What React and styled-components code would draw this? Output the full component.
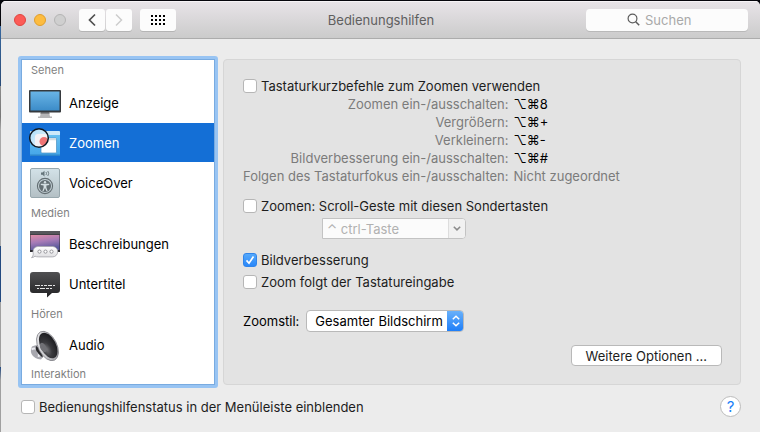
import React, { useState } from 'react'
import styled, { createGlobalStyle } from 'styled-components'

const sections = [
  {
    title: 'Sehen',
    items: [
      { name: 'Anzeige', Icon: DisplayIcon },
      { name: 'Zoomen', Icon: ZoomIcon },
      { name: 'VoiceOver', Icon: VoiceOverIcon },
    ],
  },
  {
    title: 'Medien',
    items: [
      { name: 'Beschreibungen', Icon: DescriptionsIcon },
      { name: 'Untertitel', Icon: CaptionsIcon },
    ],
  },
  {
    title: 'Hören',
    items: [{ name: 'Audio', Icon: AudioIcon }],
  },
  { title: 'Interaktion', items: [] },
]

const shortcuts = [
  { label: 'Zoomen ein-/ausschalten:', keys: '⌥⌘8' },
  { label: 'Vergrößern:', keys: '⌥⌘+' },
  { label: 'Verkleinern:', keys: '⌥⌘-' },
  { label: 'Bildverbesserung ein-/ausschalten:', keys: '⌥⌘#' },
  { label: 'Folgen des Tastaturfokus ein-/ausschalten:', keys: null },
]

function App() {
  const [active, setActive] = useState('Zoomen')

  return (
    <Desktop>
      <GlobalStyle />
      <Window>
        <Toolbar>
          <ToolbarGroup>
            <Lights>
              <Light type="button" aria-label="Schließen" $fill="#fc5b57" $edge="#e0443f" />
              <Light type="button" aria-label="Minimieren" $fill="#fdbc40" $edge="#e09e2c" />
              <Light type="button" aria-label="Vergrößern" disabled $fill="#cfcfcf" $edge="#b4b4b4" />
            </Lights>
            <NavButtons>
              <ToolButton type="button" aria-label="Zurück">
                <svg width="10" height="14" viewBox="0 0 10 14" fill="none" stroke="#505050" strokeWidth="1.7">
                  <path d="M8 1.5 2.5 7 8 12.5" />
                </svg>
              </ToolButton>
              <ToolButton type="button" aria-label="Vorwärts" disabled>
                <svg width="10" height="14" viewBox="0 0 10 14" fill="none" stroke="#cdcdcd" strokeWidth="1.5">
                  <path d="M2 1.5 7.500 7 2 12.500" />
                </svg>
              </ToolButton>
            </NavButtons>
            <ToolButton type="button" aria-label="Alle einblenden" $wide>
              <GridIcon />
            </ToolButton>
          </ToolbarGroup>
          <Title>Bedienungshilfen</Title>
          <Search>
            <svg width="13" height="13" viewBox="0 0 13 13" fill="none" stroke="#5c5c5c" strokeWidth="1.2">
              <circle cx="5.500" cy="5.500" r="4.400" />
              <path d="M8.700 8.700 12.200 12.200" strokeWidth="1.5" />
            </svg>
            <input type="search" placeholder="Suchen" aria-label="Suchen" />
          </Search>
        </Toolbar>

        <Content>
          <Sidebar aria-label="Bedienungshilfen">
            {sections.map(({ title, items }) => (
              <React.Fragment key={title}>
                <SectionTitle>{title}</SectionTitle>
                {items.map(({ name, Icon }) => (
                  <SidebarItem
                    key={name}
                    type="button"
                    $active={name === active}
                    onClick={() => setActive(name)}
                  >
                    <Icon />
                    {name}
                  </SidebarItem>
                ))}
              </React.Fragment>
            ))}
          </Sidebar>

          <Panel>
            <Check label="Tastaturkurzbefehle zum Zoomen verwenden" />
            <Shortcuts>
              <tbody>
                {shortcuts.map(({ label, keys }) => (
                  <tr key={label}>
                    <th scope="row">{label}</th>
                    {keys ? <Keys>{keys}</Keys> : <td>Nicht zugeordnet</td>}
                  </tr>
                ))}
              </tbody>
            </Shortcuts>

            <ScrollGesture>
              <Check label="Zoomen: Scroll-Geste mit diesen Sondertasten" />
              <Combo>
                <input type="text" defaultValue="⌃ ctrl-Taste" disabled aria-label="Sondertaste" />
                <button type="button" disabled aria-label="Sondertasten anzeigen">
                  <svg width="8" height="5" viewBox="0 0 8 5" fill="none" stroke="#8a8a8a" strokeWidth="1.5">
                    <path d="M.8.7 4 3.900 7.200.7" />
                  </svg>
                </button>
              </Combo>
            </ScrollGesture>

            <Options>
              <Check label="Bildverbesserung" defaultChecked />
              <Check label="Zoom folgt der Tastatureingabe" />
            </Options>

            <StyleRow>
              <label htmlFor="zoomstil">Zoomstil:</label>
              <Popup>
                <select id="zoomstil" defaultValue="full">
                  <option value="full">Gesamter Bildschirm</option>
                  <option value="pip">Bild-in-Bild</option>
                </select>
                <PopupArrows>
                  <svg width="10" height="12" viewBox="0 0 10 12" fill="none" stroke="#fff" strokeWidth="1.5">
                    <path d="M1.800 4.200 5 1.200 8.200 4.200M1.800 7.800 5 10.800 8.200 7.800" />
                  </svg>
                </PopupArrows>
              </Popup>
            </StyleRow>

            <PushButton type="button">Weitere Optionen …</PushButton>
          </Panel>
        </Content>

        <Footer>
          <Check label="Bedienungshilfenstatus in der Menüleiste einblenden" />
          <HelpButton type="button" aria-label="Hilfe">?</HelpButton>
        </Footer>
      </Window>
    </Desktop>
  )
}

export default App

function Check({ label, ...rest }) {
  return (
    <CheckLabel>
      <CheckBox>
        <input type="checkbox" {...rest} />
        <svg width="14" height="14" viewBox="0 0 14 14" fill="none" stroke="#fff" strokeWidth="1.7">
          <path d="M3.500 7.400 6 10.200 10.500 3.500" />
        </svg>
      </CheckBox>
      {label}
    </CheckLabel>
  )
}

function GridIcon() {
  return (
    <svg width="14" height="10" viewBox="0 0 14 10" fill="#000">
      {[0, 4, 8].map(y => [0, 4, 8, 12].map(x => (
        <rect key={x + '-' + y} x={x} y={y} width="2" height="2" />
      )))}
    </svg>
  )
}

function DisplayIcon() {
  return (
    <svg width="32" height="32" viewBox="0 0 32 32">
      <defs>
        <linearGradient id="screen" x1="0" y1="0" x2="0" y2="1">
          <stop offset="0" stopColor="#69b4e6" />
          <stop offset="1" stopColor="#3c8cc8" />
        </linearGradient>
      </defs>
      <path d="M12 25h8l1 4.500h2v1.500H9v-1.500h2z" fill="#b4b4b6" />
      <path d="M11.800 25h8.400l.4 2h-9.200z" fill="#858588" />
      <rect x="0" y="3" width="32" height="22.500" rx="1" fill="#35393d" />
      <rect x="1.500" y="4.500" width="29" height="19" fill="url(#screen)" />
    </svg>
  )
}

function ZoomIcon() {
  return (
    <svg width="32" height="32" viewBox="0 0 32 32">
      <defs>
        <linearGradient id="lens" x1="0" y1="0" x2="1" y2="1">
          <stop offset="0" stopColor="#a9dcf8" />
          <stop offset="1" stopColor="#eef6fb" />
        </linearGradient>
        <linearGradient id="pane" x1="0" y1="0" x2="0" y2="1">
          <stop offset="0" stopColor="#6cc4f3" />
          <stop offset="1" stopColor="#43a5e8" />
        </linearGradient>
        <clipPath id="lensClip"><circle cx="10" cy="11" r="9" /></clipPath>
      </defs>
      <rect x="1" y="4" width="30" height="25" rx="1.500" fill="url(#pane)" />
      <path d="M2 4h28a1 1 0 0 1 1 1v3H1V5a1 1 0 0 1 1-1z" fill="#cbe8f9" />
      <path d="M1 27.500h30V28q0 1-1 1H2q-1 0-1-1z" fill="#2d86cb" />
      <rect x="12" y="11" width="15.500" height="15" rx="1" fill="#fff" stroke="#4a90c0" strokeWidth=".7" />
      <path d="M12.500 11.300h14.500v2H12.500z" fill="#d8dce0" />
      <circle cx="10" cy="11" r="9.300" fill="url(#lens)" />
      <g clipPath="url(#lensClip)">
        <rect x="6" y="7" width="16" height="18" rx="3" fill="#f3f1f4" />
        <circle cx="15" cy="14.500" r="4.500" fill="#ef7474" />
      </g>
      <circle cx="10" cy="11" r="9.300" fill="none" stroke="#101820" strokeWidth="1.500" />
    </svg>
  )
}

function VoiceOverIcon() {
  return (
    <svg width="32" height="32" viewBox="0 0 32 32">
      <defs>
        <linearGradient id="plate" x1="0" y1="0" x2="0" y2="1">
          <stop offset="0" stopColor="#d3e2e8" />
          <stop offset="1" stopColor="#b3bfc4" />
        </linearGradient>
      </defs>
      <rect x="1.500" y="1.500" width="29" height="29" rx="1.500" fill="url(#plate)" stroke="#98a8ae" />
      <path d="M12 5.500h1.500l2-1.700v5.600l-2-1.700H12z" fill="#66767c" />
      <path d="M17 5q1 1.500 0 3M18.800 4q1.800 2.500 0 5" fill="none" stroke="#66767c" strokeWidth=".9" />
      <circle cx="16" cy="19" r="7.600" fill="none" stroke="#636e73" strokeWidth="1.100" />
      <circle cx="16" cy="19" r="6" fill="#636e73" />
      <circle cx="16" cy="15.300" r="1.200" fill="#d3dde1" />
      <path d="M11.800 16.800h8.400v1.200l-2.800.6v1.800l1.200 3.600h-1.200L16 21l-1.400 3h-1.200l1.200-3.600v-1.800l-2.800-.6z" fill="#d3dde1" />
    </svg>
  )
}

function DescriptionsIcon() {
  return (
    <svg width="32" height="32" viewBox="0 0 32 32">
      <defs>
        <linearGradient id="sky" x1="0" y1="0" x2=".3" y2="1">
          <stop offset="0" stopColor="#e28da6" />
          <stop offset=".5" stopColor="#a77bb7" />
          <stop offset="1" stopColor="#5c5b9d" />
        </linearGradient>
        <linearGradient id="speech" x1="0" y1="0" x2="0" y2="1">
          <stop offset="0" stopColor="#fff" />
          <stop offset="1" stopColor="#dcdcdf" />
        </linearGradient>
      </defs>
      <rect x="1" y="3" width="30" height="21" fill="#2c2b30" />
      <rect x="1" y="3" width="30" height="3.500" fill="#56575b" />
      <rect x="1.500" y="7" width="29" height="15" fill="url(#sky)" />
      <path d="M9.500 18.500h14a5.200 5.200 0 0 1 0 10.400h-14q-2.300 0-3.500-.7-1.300 1.300-3.500 1.500 1.700-1.500 1.800-3.500C3.300 21.500 5.500 18.500 9.500 18.500z" fill="url(#speech)" stroke="#a6a6ac" strokeWidth=".8" />
      <g fill="#fff" stroke="#8b8b91" strokeWidth=".9">
        <circle cx="10.500" cy="23.600" r="1.600" />
        <circle cx="16.500" cy="23.600" r="1.600" />
        <circle cx="22.500" cy="23.600" r="1.600" />
      </g>
    </svg>
  )
}

function CaptionsIcon() {
  return (
    <svg width="32" height="32" viewBox="0 0 32 32">
      <defs>
        <linearGradient id="bubble" x1="0" y1="0" x2="0" y2="1">
          <stop offset="0" stopColor="#505052" />
          <stop offset="1" stopColor="#222224" />
        </linearGradient>
      </defs>
      <path d="M4 4h24a3 3 0 0 1 3 3v15a3 3 0 0 1-3 3h-5l-5 4.500V25H4a3 3 0 0 1-3-3V7a3 3 0 0 1 3-3z" fill="url(#bubble)" />
      <path d="M6 17.500h20" stroke="#e4e4e4" strokeDasharray="5 1 2 1 3 1 4 1" />
      <path d="M8 20.500h16" stroke="#e4e4e4" strokeDasharray="2 1 5 1 3 1" />
    </svg>
  )
}

function AudioIcon() {
  return (
    <svg width="32" height="32" viewBox="0 0 32 32">
      <defs>
        <linearGradient id="rim" x1="0" y1="0" x2="1" y2="1">
          <stop offset="0" stopColor="#f4f4f6" />
          <stop offset="1" stopColor="#919197" />
        </linearGradient>
        <radialGradient id="cone" cx=".3" cy=".6" r=".8">
          <stop offset="0" stopColor="#77777b" />
          <stop offset=".35" stopColor="#3a3a3e" />
          <stop offset="1" stopColor="#151518" />
        </radialGradient>
      </defs>
      <path d="M3 17.500q3-1.500 5-1.500l6 12-2 2.500q-3.500-.5-5.500-1.500Q1 26 2 20z" fill="#a7a7ae" />
      <path d="M2.600 20.500q2.500-2 5.500 0 2.500 3 1.500 7.500" fill="none" stroke="#e9e9ee" strokeWidth="2" />
      <path d="M7 17q-2 5 6.500 11.500L14 22z" fill="#28282b" />
      <ellipse cx="18.500" cy="17" rx="9.300" ry="15.800" transform="rotate(-27 18.500 17)" fill="url(#rim)" stroke="#77777d" strokeWidth=".7" />
      <ellipse cx="19.200" cy="16.500" rx="7.700" ry="13.800" transform="rotate(-27 19.200 16.500)" fill="url(#cone)" />
      <ellipse cx="14.300" cy="18.500" rx="3" ry="5" transform="rotate(-27 14.300 18.500)" fill="#707075" />
    </svg>
  )
}

const GlobalStyle = createGlobalStyle`
  *, *::before, *::after {
    box-sizing: border-box;
  }
  body {
    margin: 0;
    color: #1d1d1d;
    font: 13px/18px Inter, "Liberation Sans", sans-serif;
  }
  button, input, select {
    margin: 0;
    padding: 0;
    color: inherit;
    font: inherit;
  }
  svg {
    display: block;
    flex: none;
  }
`

const Desktop = styled.div`
  display: flex;
  min-height: 100vh;
  padding: 1px 0 0 1px;
  background: linear-gradient(
    #06060c 6%, #39699f 6%, #294a77 20%, #8d8d8d 20%, #777 27%, #a9a9a9 30%,
    #a9a9a9 57%, #234a80 57%, #234a80 70%, #a0a0a0 70%, #a0a0a0 85%, #234a80 85%, #a0a0a0 88%
  );
`

const Window = styled.div`
  flex: 1;
  display: flex;
  flex-direction: column;
  border-radius: 5px 5px 0 0;
  background: #ececec;
  overflow: hidden;
`

const Toolbar = styled.header`
  display: grid;
  grid-template-columns: 1fr auto 1fr;
  align-items: center;
  height: 38px;
  padding: 0 12px 0 13px;
  border-bottom: 1px solid #acacac;
  background: linear-gradient(#e8e4e8, #cbcbcb);
  box-shadow: inset 0 1px #f6f3f6;
`

const ToolbarGroup = styled.div`
  display: flex;
  align-items: center;
  gap: 8px;
`

const Lights = styled.div`
  display: flex;
  gap: 8px;
  margin-right: 5px;
`

const Light = styled.button`
  width: 12px;
  height: 12px;
  border: 1px solid ${p => p.$edge};
  border-radius: 50%;
  background: ${p => p.$fill};
`

const NavButtons = styled.div`
  display: flex;
  gap: 1px;
`

const ToolButton = styled.button`
  display: flex;
  align-items: center;
  justify-content: center;
  width: ${p => (p.$wide ? 36 : 26)}px;
  height: 22px;
  border: 0;
  border-radius: 3px;
  background: #fcfcfc;
  box-shadow: 0 1px #b5b5b5;
`

const Title = styled.h1`
  margin: 0;
  color: #5f5f5f;
  font-size: 13px;
  font-weight: 400;
`

const Search = styled.label`
  justify-self: end;
  display: flex;
  align-items: center;
  gap: 5px;
  width: 162px;
  height: 22px;
  padding-left: 41px;
  border-radius: 4px;
  background: #fcfcfc;
  box-shadow: 0 1px #b9b9b9;
  input {
    flex: 1;
    min-width: 0;
    border: 0;
    outline: 0;
    background: none;
    appearance: none;
  }
  input::placeholder {
    color: #a9a9a9;
  }
`

const Content = styled.main`
  display: grid;
  grid-template-columns: 200px 1fr;
  gap: 5px;
  padding: 17px 19px 0 17px;
`

const Sidebar = styled.nav`
  display: flex;
  flex-direction: column;
  border: 3px solid #98c4f3;
  border-radius: 3px;
  outline: 1px solid #79abe0;
  outline-offset: -4px;
  padding: 1px;
  background: #fff;
`

const SectionTitle = styled.h2`
  margin: 0;
  padding-left: 9px;
  color: #7f7f7f;
  font-size: 11px;
  font-weight: 400;
  line-height: 21px;
  &:first-child {
    margin-bottom: 2px;
  }
  &:last-child {
    line-height: 19px;
  }
`

const SidebarItem = styled.button`
  display: flex;
  align-items: center;
  gap: 8px;
  height: 39px;
  margin-bottom: 1px;
  padding-left: 7px;
  border: 0;
  background: ${p => (p.$active ? '#146fd6' : 'none')};
  color: ${p => (p.$active ? '#fff' : '#000')};
`

const Panel = styled.section`
  display: flex;
  flex-direction: column;
  align-items: flex-start;
  margin: 3px 0;
  padding: 17px 18px 18px 19px;
  border: 1px solid #d6d6d6;
  border-radius: 4px;
  background: #e3e3e3;
`

const CheckLabel = styled.label`
  display: flex;
  align-items: center;
  gap: 4px;
`

const CheckBox = styled.span`
  display: grid;
  input, svg {
    grid-area: 1 / 1;
  }
  input {
    width: 14px;
    height: 14px;
    border: 1px solid #b6b6b6;
    border-radius: 3px;
    background: #fff;
    appearance: none;
  }
  input:checked {
    border-color: #3185ea;
    background: linear-gradient(#55a9fb, #2a87f9);
  }
  svg {
    visibility: hidden;
    pointer-events: none;
  }
  input:checked + svg {
    visibility: visible;
  }
`

const Shortcuts = styled.table`
  border-collapse: collapse;
  color: #7b7b7b;
  th, td {
    height: 18px;
    padding: 0;
    font-weight: 400;
    line-height: 18px;
    white-space: nowrap;
  }
  th {
    padding-right: 5px;
    text-align: right;
  }
`

const Keys = styled.td`
  color: #000;
`

const ScrollGesture = styled.div`
  display: flex;
  flex-direction: column;
  gap: 3px;
  margin-top: 12px;
`

const Combo = styled.div`
  display: flex;
  width: 144px;
  height: 21px;
  margin-left: 79px;
  border: 1px solid #c3c3c3;
  border-radius: 0 4px 4px 0;
  background: #fafafa;
  overflow: hidden;
  input {
    flex: 1;
    min-width: 0;
    padding-left: 4px;
    border: 0;
    background: #fbfbfb;
    color: #b1b1b1;
  }
  button {
    display: flex;
    align-items: center;
    justify-content: center;
    width: 17px;
    border: 0;
    border-left: 1px solid #ddd;
    background: #f1f1f1;
  }
`

const Options = styled.div`
  display: flex;
  flex-direction: column;
  gap: 4px;
  margin-top: 12px;
`

const StyleRow = styled.div`
  display: flex;
  align-items: center;
  gap: 7px;
  margin-top: 19px;
  color: #000;
`

const Popup = styled.div`
  display: grid;
  border: 1px solid #b9b9b9;
  border-radius: 4px;
  background: #fff;
  overflow: hidden;
  select {
    grid-area: 1 / 1;
    height: 20px;
    padding: 0 20px 0 8px;
    border: 0;
    background: none;
    appearance: none;
  }
`

const PopupArrows = styled.span`
  grid-area: 1 / 1;
  justify-self: end;
  display: flex;
  align-items: center;
  justify-content: center;
  width: 17px;
  margin: -1px;
  background: linear-gradient(#6cb3fa, #1a7cf8);
  pointer-events: none;
`

const PushButton = styled.button`
  align-self: flex-end;
  height: 21px;
  margin-top: auto;
  padding: 0 14px;
  border: 1px solid #b9b9b9;
  border-radius: 4px;
  background: #fff;
`

const Footer = styled.footer`
  display: flex;
  align-items: center;
  justify-content: space-between;
  padding: 8px 19px 0 20px;
`

const HelpButton = styled.button`
  width: 21px;
  height: 21px;
  border: 1px solid #bcbcbc;
  border-radius: 50%;
  background: #fff;
  color: #1a80f7;
  font-size: 15px;
  line-height: 18px;
`
